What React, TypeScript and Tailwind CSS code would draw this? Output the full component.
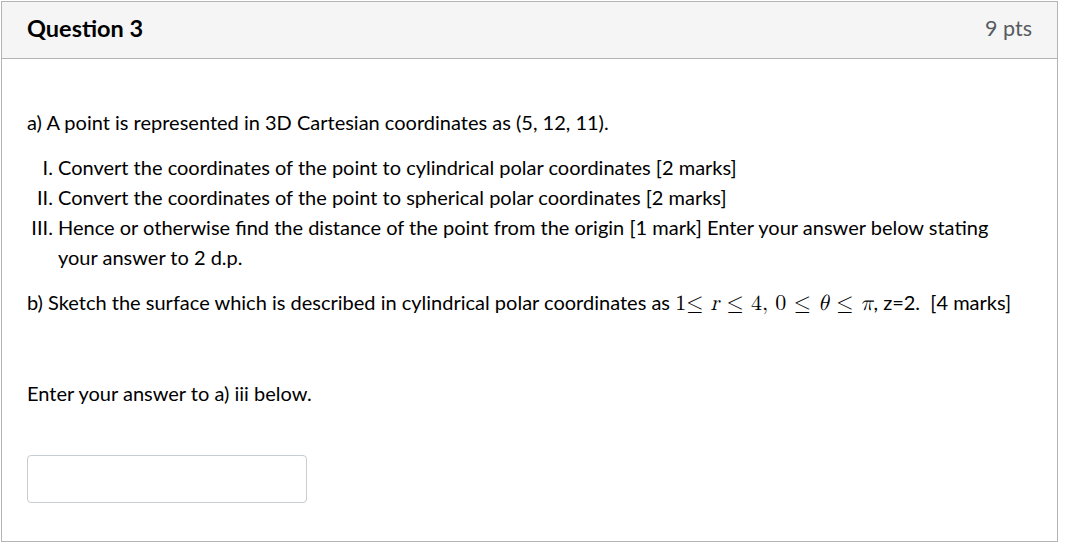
import React from 'react';

const mathFont = { fontFamily: '"Latin Modern Math", "DejaVu Serif", "Liberation Serif", serif' };

export default function App() {
  return (
    <div className="bg-white w-[1067px] h-[547px] pt-px pl-px" style={{ fontFamily: 'Lato, "Noto Sans", sans-serif' }}>
      <div className="w-[1057px] h-[541px] border border-[#b4b4b4] text-[#2d3b45]">
        {/* Header */}
        <div className="h-[57px] bg-[#f5f5f5] border-b border-[#b4b4b4] flex items-center justify-between pl-[25px] pr-[25px] pb-[2px]">
          <h2 className="text-[23.5px] font-bold text-[#000] leading-none">Question 3</h2>
          <div className="text-[21.5px] text-[#555b61] leading-none">9 pts</div>
        </div>

        {/* Body */}
        <div className="px-[25px] pt-[48px] text-[20px] leading-[30px] text-[#000]">
          <p>a) A point is represented in 3D Cartesian coordinates as (5, 12, 11).</p>
          <ol className="mt-[15px] pl-[31px] list-[upper-roman]">
            <li>Convert the coordinates of the point to cylindrical polar coordinates [2 marks]</li>
            <li>Convert the coordinates of the point to spherical polar coordinates [2 marks]</li>
            <li>
              Hence or otherwise find the distance of the point from the origin [1 mark] Enter your answer below stating
              your answer to 2 d.p.
            </li>
          </ol>
          <p className="mt-[15px]">
            b) Sketch the surface which is described in cylindrical polar coordinates as{' '}
            <span style={mathFont} className="text-[22px]">
              1≤ <i>r</i> ≤ 4, 0 ≤ <i>θ</i> ≤ <i>π</i>
            </span>
            , z=2.&nbsp; [4 marks]
          </p>
          <p className="mt-[60px]">Enter your answer to a) iii below.</p>
          <input
            type="text"
            className="mt-[47px] block w-[280px] h-[48px] rounded-[4px] border border-[#c7cdd1] bg-white outline-none"
          />
        </div>
      </div>
    </div>
  );
}
